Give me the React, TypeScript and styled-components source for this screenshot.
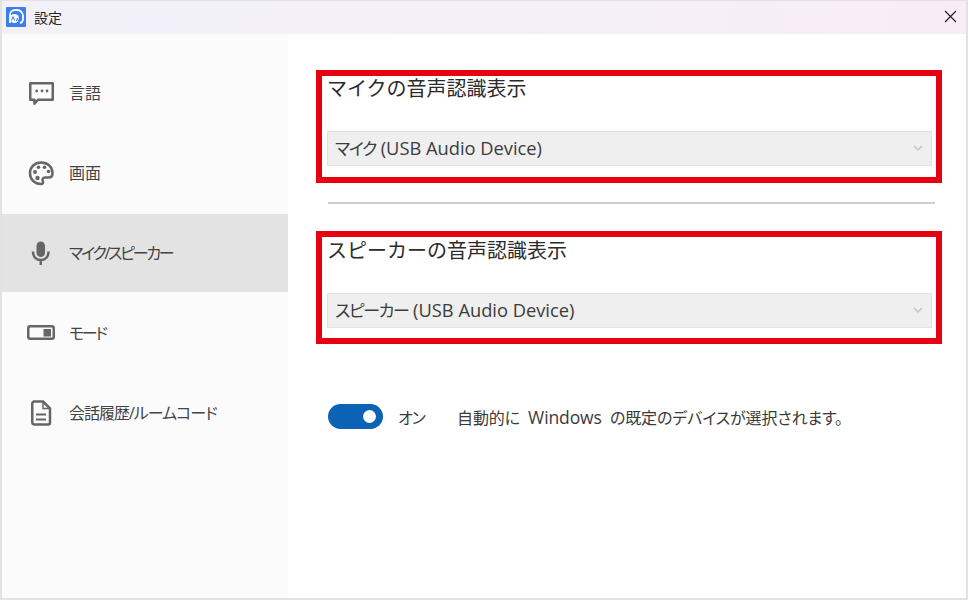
import React from "react";
import styled, { createGlobalStyle } from "styled-components";

const Global = createGlobalStyle`
  html, body { margin: 0; padding: 0; background: #fff; }
  body { font-family: "Open Sans", "Noto Sans CJK JP", sans-serif; color: #333; }
  #root { width: 968px; height: 600px; overflow: hidden; }
  * { box-sizing: border-box; }
`;

const Window = styled.div`
  width: 968px;
  height: 600px;
  display: flex;
  flex-direction: column;
  border: 2px solid #e2e2e2;
  border-top-width: 1px;
  background: #fff;
`;

const TitleBar = styled.header`
  height: 33px;
  flex: none;
  display: flex;
  align-items: center;
  padding: 0 9px 2px 4px;
  background: linear-gradient(90deg, #f2f1f8 0%, #f4f0f8 50%, #f8edf6 100%);
`;

const AppLogo = styled.svg`
  width: 20px;
  height: 20px;
  flex: none;
`;

const TitleText = styled.span`
  margin-left: 8px;
  font-size: 14px;
  color: #222;
  flex: 1;
`;

const CloseButton = styled.svg`
  width: 13px;
  height: 13px;
  flex: none;
`;

const Body = styled.div`
  flex: 1;
  display: flex;
  min-height: 0;
`;

const Sidebar = styled.nav`
  width: 286px;
  flex: none;
  background: #fbfbfb;
  padding-top: 20px;
`;

const NavItem = styled.div<{ $active?: boolean }>`
  height: 78px;
  margin-bottom: 2px;
  display: flex;
  align-items: center;
  background: ${(p) => (p.$active ? "#e3e3e3" : "transparent")};
`;

const NavIcon = styled.span`
  width: 67px;
  height: 26px;
  flex: none;
  display: flex;
  justify-content: center;
  padding-left: 11px;
  color: #666;
`;

const NavLabel = styled.span<{ $spacing: number }>`
  font-size: 16px;
  line-height: 20px;
  margin-top: -1px;
  font-feature-settings: "palt";
  letter-spacing: ${(p) => p.$spacing}px;
  white-space: nowrap;
  color: #444;
`;

const Content = styled.main`
  flex: 1;
  padding: 36px 0 0 28px;
`;

const RedBox = styled.section`
  width: 626px;
  height: 113px;
  border: 6px solid #e60012;
  padding: 0 4px 0 5px;
  display: flex;
  flex-direction: column;
`;

const SectionTitle = styled.h2<{ $lower?: boolean }>`
  margin: 0;
  height: 24px;
  line-height: ${(p) => (p.$lower ? 28 : 26)}px;
  font-size: 20px;
  font-weight: 400;
  color: #2b2b2b;
`;

const Select = styled.div<{ $lower?: boolean }>`
  margin-top: ${(p) => (p.$lower ? 32 : 31)}px;
  height: 35px;
  flex: none;
  background: #efefef;
  border: 1px solid #e2e2e2;
  display: flex;
  align-items: center;
  justify-content: space-between;
  padding: 0 8px 2px 7px;
  font-size: 18.300px;
  color: #3c3c3c;
`;

const SelectText = styled.span`
  white-space: pre;
`;

const SelectKana = styled.span`
  font-size: 17px;
  font-feature-settings: "palt";
  letter-spacing: -1.400px;
`;

const Chevron = styled.svg`
  width: 10px;
  height: 7px;
  flex: none;
  margin-top: 2px;
`;

const Divider = styled.hr`
  margin: 19px 0 27px 12px;
  width: 607px;
  border: none;
  border-top: 2px solid #cfcfcf;
`;

const ToggleRow = styled.div`
  margin: 60px 0 0 12px;
  display: flex;
  align-items: center;
  font-size: 16px;
  font-feature-settings: "palt";
  color: #3a3a3a;
`;

const Toggle = styled.span`
  position: relative;
  width: 55px;
  height: 25px;
  border-radius: 13px;
  background: #0c62b5;
  flex: none;
`;

const Knob = styled.span`
  position: absolute;
  right: 7px;
  top: 6px;
  width: 13px;
  height: 13px;
  border-radius: 50%;
  background: #fff;
`;

const OnLabel = styled.span`
  margin-left: 15px;
  width: 59px;
  letter-spacing: -1px;
`;

const Hint = styled.span`
  white-space: pre;
  word-spacing: 4px;
  letter-spacing: -0.100px;
`;

const HintLatin = styled.span`
  font-size: 17.500px;
`;

const stroke = { fill: "none", stroke: "currentColor", strokeWidth: 2.500 } as const;

const ChatIcon = () => (
  <svg width="26" height="26" viewBox="0 0 26 26">
    <path d="M2.250 3.250h22.500v16.500H10l-3.500 4v-4H2.250z" {...stroke} strokeLinejoin="round" />
    <circle cx="8.700" cy="11" r="1.400" fill="currentColor" />
    <circle cx="14" cy="11" r="1.400" fill="currentColor" />
    <circle cx="19" cy="11" r="1.400" fill="currentColor" />
  </svg>
);

const PaletteIcon = () => (
  <svg width="26" height="26" viewBox="0 0 26 26">
    <path d="M13 2.500C6.500 2.500 2 7.200 2 13.200S6.500 24 13 24c2 0 2.500-1.500 1.800-2.800-.9-1.700.2-3.700 2.200-3.700h3.500c2.500 0 4-1.800 4-4.300C24.500 6.800 19.500 2.500 13 2.500z" {...stroke} />
    <circle cx="7" cy="12" r="2" fill="currentColor" />
    <circle cx="10.500" cy="7.300" r="1.800" fill="currentColor" />
    <circle cx="16.500" cy="7.300" r="1.800" fill="currentColor" />
    <circle cx="20.500" cy="11.500" r="1.800" fill="currentColor" />
    <circle cx="9.500" cy="18" r="2.200" fill="currentColor" />
  </svg>
);

const MicIcon = () => (
  <svg width="26" height="26" viewBox="0 0 26 26">
    <rect x="8.500" y="1.500" width="8.500" height="15.500" rx="4.250" fill="currentColor" />
    <path d="M5 11.500c0 5.500 3.500 8.500 7.750 8.500s7.750-3 7.750-8.500M12.750 20v5" {...stroke} />
  </svg>
);

const ModeIcon = () => (
  <svg width="28" height="26" viewBox="0 0 28 26">
    <rect x="1.250" y="6.250" width="25.500" height="12.500" rx="2" {...stroke} />
    <rect x="16.500" y="9" width="7.500" height="7.500" fill="currentColor" />
  </svg>
);

const DocIcon = () => (
  <svg width="22" height="26" viewBox="0 0 22 26">
    <path d="M2.250 3.500a2 2 0 0 1 2-2H13l7 7V22.500a2 2 0 0 1-2 2H4.250a2 2 0 0 1-2-2z" {...stroke} strokeLinejoin="round" />
    <path d="M13 1.500V8.500h7" fill="none" stroke="currentColor" strokeWidth="1.500" />
    <path d="M6 14.500h10M6 19.500h10" {...stroke} strokeWidth="2" />
  </svg>
);

const nav: { label: string; icon: React.ReactNode; spacing: number; active?: boolean }[] = [
  { label: "言語", icon: <ChatIcon />, spacing: 0 },
  { label: "画面", icon: <PaletteIcon />, spacing: 0 },
  { label: "マイク/スピーカー", icon: <MicIcon />, spacing: -2.300, active: true },
  { label: "モード", icon: <ModeIcon />, spacing: -2.300 },
  { label: "会話履歴/ルームコード", icon: <DocIcon />, spacing: -1 },
];

const DownChevron = () => (
  <Chevron viewBox="0 0 10 7">
    <path d="M1 1l4 4 4-4" fill="none" stroke="#c4c4c4" strokeWidth="1.500" />
  </Chevron>
);

export default function App() {
  return (
    <>
      <Global />
      <Window>
        <TitleBar>
          <AppLogo viewBox="0 0 20 20">
            <rect width="20" height="20" rx="1" fill="#3a7ff0" />
            <path d="M4 16V8a5 5 0 0 1 5-5h2a6 6 0 0 1 6 6v4a4 4 0 0 1-3 3" fill="none" stroke="#fff" strokeWidth="1.800" />
            <circle cx="8.500" cy="11.500" r="4.500" fill="#fff" />
            <path d="M7 9.500l-1.500 4M7 9.500l1.500 4M11.500 11l-1 3M11.500 11l1 3" stroke="#3a7ff0" strokeWidth="1" fill="none" />
          </AppLogo>
          <TitleText>設定</TitleText>
          <CloseButton viewBox="0 0 13 13">
            <path d="M1 1l11 11M12 1L1 12" stroke="#222" strokeWidth="1.200" />
          </CloseButton>
        </TitleBar>
        <Body>
          <Sidebar>
            {nav.map((n) => (
              <NavItem key={n.label} $active={n.active}>
                <NavIcon>{n.icon}</NavIcon>
                <NavLabel $spacing={n.spacing}>{n.label}</NavLabel>
              </NavItem>
            ))}
          </Sidebar>
          <Content>
            <RedBox>
              <SectionTitle>マイクの音声認識表示</SectionTitle>
              <Select>
                <SelectText><SelectKana>マイク</SelectKana> (USB Audio Device)</SelectText>
                <DownChevron />
              </Select>
            </RedBox>
            <Divider />
            <RedBox>
              <SectionTitle $lower>スピーカーの音声認識表示</SectionTitle>
              <Select $lower>
                <SelectText><SelectKana>スピーカー</SelectKana> (USB Audio Device)</SelectText>
                <DownChevron />
              </Select>
            </RedBox>
            <ToggleRow>
              <Toggle><Knob /></Toggle>
              <OnLabel>オン</OnLabel>
              <Hint>自動的に <HintLatin>Windows</HintLatin> の既定のデバイスが選択されます。</Hint>
            </ToggleRow>
          </Content>
        </Body>
      </Window>
    </>
  );
}
